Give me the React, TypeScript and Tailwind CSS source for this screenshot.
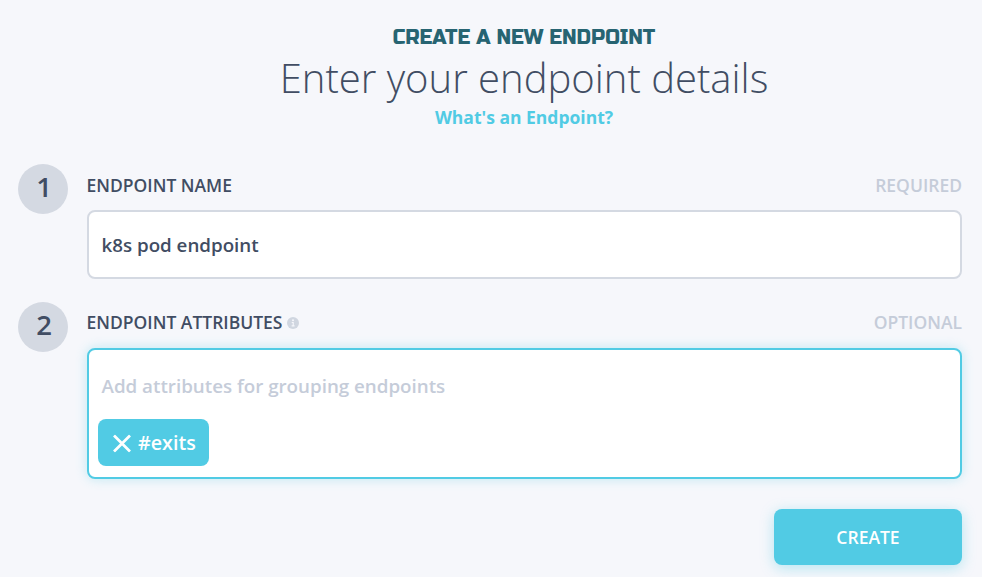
import type { ReactNode } from 'react';

function Step({ n, label, note, info, children }: { n: number; label: string; note: string; info?: boolean; children: ReactNode }) {
  return (
    <section className="flex">
      <div className="mr-[19px] flex h-[50px] w-[50px] shrink-0 items-center justify-center rounded-full bg-[#d4d9e2] text-[27.5px] leading-none font-semibold">
        <span className="translate-x-px -translate-y-[2px]">{n}</span>
      </div>
      <div className="flex-1">
        <div className={info ? 'flex h-[46px] items-center justify-between pb-[5px] text-[17.5px] font-semibold' : 'flex h-[46px] items-center justify-between pb-[3px] text-[17.5px] font-semibold'}>
          <div className="-ml-[0.5px] flex items-center gap-[5px]">
            <span>{label}</span>
            {info && (
              <svg className="h-3 w-3" viewBox="0 0 12 12">
                <circle cx="6" cy="6" r="6" fill="#d0d6e0" />
                <path d="M4.7 5.5H6.2V8.7M4.6 8.9h3" stroke="#f6f7fb" strokeWidth="1.1" fill="none" />
                <circle cx="6" cy="3.2" r="1" fill="#f6f7fb" />
              </svg>
            )}
          </div>
          <span className="text-[#c5ccd9]">{note}</span>
        </div>
        {children}
      </div>
    </section>
  );
}

export default function App() {
  return (
    <main className="h-[577px] w-[982px] overflow-hidden bg-[#f6f7fb] pt-6 pr-5 pl-[18px] font-['Open_Sans',sans-serif] text-[#414d63]">
      <header className="flex h-[140px] flex-col items-center pl-[68px] text-center">
        <h2 className="font-['Russo_One','Open_Sans',sans-serif] text-[20px] leading-[28px] font-normal text-[#276472]">CREATE A NEW ENDPOINT</h2>
        <h1 className="text-[40px] leading-[52px] font-light">Enter your endpoint details</h1>
        <a className="mt-px text-[17.5px] leading-[24px] font-bold text-[#51cbe4]">What's an Endpoint?</a>
      </header>
      <Step n={1} label="ENDPOINT NAME" note="REQUIRED">
        <div className="flex h-[69px] items-center rounded-lg border-2 border-[#d4d9e2] bg-white px-[12.5px] pt-px text-[18.75px] font-semibold">k8s pod endpoint</div>
      </Step>
      <div className="h-[23px]" />
      <Step n={2} label="ENDPOINT ATTRIBUTES" note="OPTIONAL" info>
        <div className="h-[131px] rounded-lg border-2 border-[#51cbe4] bg-white px-[9px] pt-[23px] shadow-[0_0_12px_#51cbe455]">
          <div className="pl-[3.5px] text-[18.75px] leading-[26px] font-semibold text-[#c5ccd9]">Add attributes for grouping endpoints</div>
          <div className="mt-5 flex h-[47px] w-[111px] items-center rounded-lg bg-[#51cbe4] pt-px pl-[15px] text-[19.7px] font-semibold text-white">
            <svg className="mr-[7px] h-[18px] w-[18px] shrink-0 translate-y-[0.5px]" viewBox="0 0 18 18"><path d="M1 1l16 16M17 1L1 17" stroke="white" strokeWidth="2.7" /></svg>
            #exits
          </div>
        </div>
      </Step>
      <div className="mt-[30px] flex justify-end">
        <button className="h-14 w-[188px] rounded-lg bg-[#51cbe4] pt-px text-[17.5px] font-semibold text-white shadow-[0_3px_14px_#51cbe466]">CREATE</button>
      </div>
    </main>
  );
}
